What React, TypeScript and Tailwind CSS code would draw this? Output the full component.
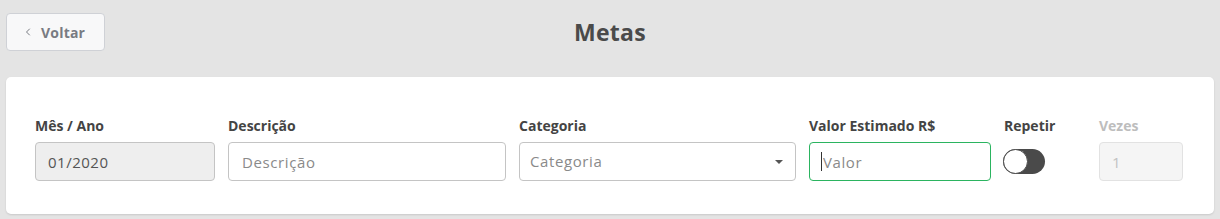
import { ChevronLeft } from "lucide-react"

const font = { fontFamily: '"Open Sans", "Liberation Sans", sans-serif' }

function Label({ children, muted }: { children: string; muted?: boolean }) {
  return (
    <span
      className={`block h-5 text-[14px] leading-5 font-bold mb-[6px] whitespace-nowrap ${
        muted ? "text-[#bdbdbd]" : "text-[#444444]"
      }`}
    >
      {children}
    </span>
  )
}

export default function App() {
  return (
    <div className="min-h-[219px] bg-[#e4e4e4] px-[6px] pt-[13px]" style={font}>
      {/* header */}
      <div className="grid grid-cols-[1fr_auto_1fr] items-center h-[38px]">
        <div>
          <button className="h-[38px] w-[99px] rounded-[4px] border border-[#cfd1d6] bg-[#f8f8f9] flex items-center pl-[15px] gap-[7px] text-[14px] font-bold text-[#787b82] tracking-[0.2px]">
            <ChevronLeft className="w-3 h-3" strokeWidth={2} />
            Voltar
          </button>
        </div>
        <h1 className="text-[23px] font-bold text-[#4a4a4a] tracking-[0.3px]">Metas</h1>
        <div />
      </div>

      {/* card */}
      <div className="mt-[26px] bg-white rounded-[5px] shadow-[0_1px_2px_rgba(0,0,0,0.12)] pl-[29px] pr-[31px] pt-[39px] pb-[33px]">
        <div className="grid grid-cols-[180px_278px_277px_182px_82px_1fr] gap-x-[13px] items-end">
          <div>
            <Label>Mês / Ano</Label>
            <input
              readOnly
              value="01/2020"
              className="h-[39px] w-full rounded-[4px] border border-[#c4c4c4] bg-[#eeeeee] px-[12px] text-[15px] tracking-[0.5px] text-[#555555] outline-none"
            />
          </div>
          <div>
            <Label>Descrição</Label>
            <input
              placeholder="Descrição"
              className="h-[39px] w-full rounded-[4px] border border-[#c4c4c4] bg-white px-[13px] text-[15px] tracking-[0.6px] text-[#555] placeholder:text-[#8a8a8a] outline-none"
            />
          </div>
          <div>
            <Label>Categoria</Label>
            <div className="h-[39px] w-full rounded-[4px] border border-[#c4c4c4] bg-white pl-[10px] pr-[12px] flex items-center justify-between text-[15px] tracking-[0.6px] text-[#8a8a8a]">
              <span>Categoria</span>
              <span className="w-0 h-0 border-l-[4px] border-r-[4px] border-t-[4px] border-l-transparent border-r-transparent border-t-[#555555]" />
            </div>
          </div>
          <div>
            <Label>Valor Estimado R$</Label>
            <div className="relative">
              <input
                placeholder="Valor"
                className="h-[39px] w-full rounded-[4px] border border-[#2bb460] bg-white pl-[13px] pr-[12px] text-[15px] tracking-[0.6px] text-[#555] placeholder:text-[#8a8a8a] outline-none"
              />
              <span className="absolute left-[12px] top-[10px] h-[19px] w-px bg-[#333333]" />
            </div>
          </div>
          <div>
            <Label>Repetir</Label>
            <div className="h-[39px] flex items-center">
              <div className="relative h-[25px] w-[42px] rounded-full bg-[#4a4a4a] -ml-[1px]">
                <span className="absolute left-0 top-0 h-[25px] w-[25px] rounded-full bg-white border border-[#4a4a4a]" />
              </div>
            </div>
          </div>
          <div>
            <Label muted>Vezes</Label>
            <input
              readOnly
              value="1"
              className="h-[39px] w-full rounded-[4px] border border-[#e2e2e2] bg-[#f5f5f5] px-[12px] text-[15px] text-[#c2c2c2] outline-none"
            />
          </div>
        </div>
      </div>
    </div>
  )
}
